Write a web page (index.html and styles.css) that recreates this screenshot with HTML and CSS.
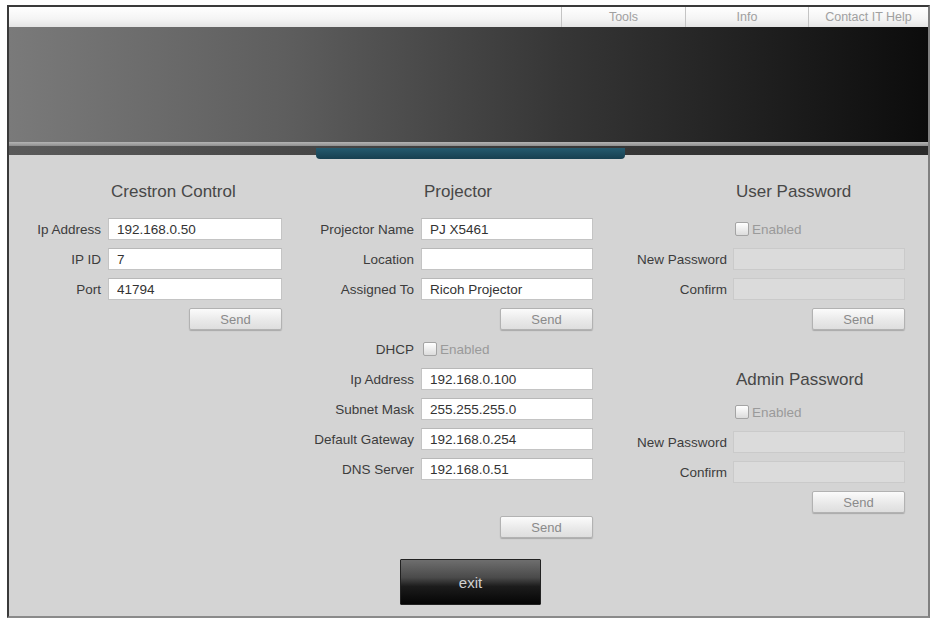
FILE: index.html
```html
<!DOCTYPE html>
<html lang="en">

<head>
    <meta charset="UTF-8">
    <meta name="viewport" content="width=device-width, initial-scale=1.0">
    <title>Projector Setup</title>
    <!-- page styles -->
    <link rel="stylesheet" href="styles.css">
</head>

<body>
    <!-- main frame -->
    <div class="frame">
        <!-- top navigation -->
        <div class="nav">
            <a class="nav-item nav-tools">Tools</a>
            <a class="nav-item nav-info">Info</a>
            <a class="nav-item nav-help">Contact IT Help</a>
        </div>
        <!-- dark banner -->
        <div class="banner"></div>
        <div class="stripe"></div>
        <div class="band"><div class="tab"></div></div>

        <!-- settings columns -->
        <div class="panel">
            <!-- crestron control -->
            <div class="col col-crestron">
                <h2 class="heading">Crestron Control</h2>
                <label class="lbl">Ip Address</label><input class="field" type="text" value="192.168.0.50">
                <label class="lbl">IP ID</label><input class="field" type="text" value="7">
                <label class="lbl">Port</label><input class="field" type="text" value="41794">
                <div class="btn-cell"><button class="btn">Send</button></div>
            </div>

            <!-- projector -->
            <div class="col col-projector">
                <h2 class="heading">Projector</h2>
                <label class="lbl">Projector Name</label><input class="field" type="text" value="PJ X5461">
                <label class="lbl">Location</label><input class="field" type="text" value="">
                <label class="lbl">Assigned To</label><input class="field" type="text" value="Ricoh Projector">
                <div class="btn-cell"><button class="btn">Send</button></div>
                <label class="lbl">DHCP</label>
                <div class="check"><span class="box"></span><span class="check-text">Enabled</span></div>
                <label class="lbl">Ip Address</label><input class="field" type="text" value="192.168.0.100">
                <label class="lbl">Subnet Mask</label><input class="field" type="text" value="255.255.255.0">
                <label class="lbl">Default Gateway</label><input class="field" type="text" value="192.168.0.254">
                <label class="lbl">DNS Server</label><input class="field" type="text" value="192.168.0.51">
                <div class="btn-cell btn-last"><button class="btn">Send</button></div>
            </div>

            <!-- passwords -->
            <div class="col col-password">
                <h2 class="heading">User Password</h2>
                <div class="check"><span class="box"></span><span class="check-text">Enabled</span></div>
                <label class="lbl">New Password</label><input class="field" type="password" disabled>
                <label class="lbl">Confirm</label><input class="field" type="password" disabled>
                <div class="btn-cell"><button class="btn">Send</button></div>

                <h2 class="heading heading-admin">Admin Password</h2>
                <div class="check"><span class="box"></span><span class="check-text">Enabled</span></div>
                <label class="lbl">New Password</label><input class="field" type="password" disabled>
                <label class="lbl">Confirm</label><input class="field" type="password" disabled>
                <div class="btn-cell"><button class="btn">Send</button></div>
            </div>
        </div>

        <!-- exit button -->
        <div class="exit-row">
            <button class="exit">exit</button>
        </div>
    </div>
</body>

</html>
```

FILE: styles.css
```css
/* page body */
body {
    margin: 0;
    background-color: #ffffff;
    font-family: "Liberation Sans", Arial, sans-serif;
}

/* main frame */
.frame {
    box-sizing: border-box;
    margin: 5px 1px 0 7px;
    height: 613px;
    border: 2px solid #3a3a3a;
    border-right-color: #808080;
    border-bottom-color: #8a8a8a;
    background-color: #d4d4d4;
    display: flex;
    flex-direction: column;
}

/* top navigation */
.nav {
    height: 20px;
    display: flex;
    justify-content: flex-end;
    background: linear-gradient(#ffffff, #f4f4f4 60%, #e4e4e4);
}

.nav-item {
    border-left: 1px solid #c4c4c4;
    color: #a0a0a0;
    font-size: 12.5px;
    line-height: 20px;
    text-align: center;
}

.nav-tools { width: 123px; }
.nav-info { width: 122px; }
.nav-help { width: 119px; }

/* dark banner */
.banner {
    height: 115px;
    background: linear-gradient(to right, #7a7a7a, #5e5e5e 30%, #363636 60%, #0c0c0c);
}

.stripe {
    height: 4px;
    background: linear-gradient(#b4b4b4, #8e8e8e);
}

.band {
    height: 9px;
    display: flex;
    background: linear-gradient(to right, #5a5a5a, #3c3c3c 50%, #2a2a2a);
}

.tab {
    position: relative;
    margin: 2px 0 0 307px;
    width: 309px;
    height: 11px;
    border-radius: 0 0 4px 4px;
    background: linear-gradient(#245a6e, #173f50);
}

/* settings columns */
.panel {
    display: flex;
    align-items: flex-start;
    padding-top: 28px;
}

.col {
    display: grid;
    row-gap: 8px;
    align-items: center;
}

.col-crestron {
    grid-template-columns: 92px 174px;
    column-gap: 7px;
}

.col-projector {
    margin-left: 22px;
    grid-template-columns: 110px 172px;
    column-gap: 7px;
}

.col-password {
    margin-left: 30px;
    grid-template-columns: 104px 172px;
    column-gap: 6px;
}

/* section headings */
.heading {
    grid-column: 2;
    margin: 0 0 9px;
    padding-left: 3px;
    font-size: 17px;
    font-weight: normal;
    line-height: 18px;
    color: #474747;
}

.heading-admin {
    margin: 33px 0 4px;
}

/* labels */
.lbl {
    grid-column: 1;
    text-align: right;
    font-size: 13.5px;
    color: #3c3c3c;
}

/* text fields */
.field {
    grid-column: 2;
    box-sizing: border-box;
    height: 22px;
    width: 100%;
    margin: 0;
    padding: 0 8px;
    border: 1px solid #c4c4c4;
    border-top-color: #b8b8b8;
    background-color: #ffffff;
    font-family: "Liberation Sans", Arial, sans-serif;
    font-size: 13.5px;
    color: #333333;
}

.field:disabled {
    background-color: #dbdbdb;
    border-color: #cacaca;
}

/* checkbox rows */
.check {
    grid-column: 2;
    height: 22px;
    display: flex;
    align-items: center;
    padding-left: 2px;
}

.box {
    width: 14px;
    height: 14px;
    box-sizing: border-box;
    border: 1px solid #a4a4a4;
    border-radius: 2px;
    background: linear-gradient(#ffffff, #dcdcdc);
}

.check-text {
    margin-left: 3px;
    font-size: 13.5px;
    color: #9a9a9a;
}

/* send buttons */
.btn-cell {
    grid-column: 2;
    display: flex;
    justify-content: flex-end;
}

.btn-last {
    margin-top: 28px;
}

.btn {
    width: 93px;
    height: 22px;
    padding: 0;
    border: 1px solid #b2b2b2;
    border-radius: 2px;
    background: linear-gradient(#fbfbfb, #e8e8e8 60%, #dedede);
    box-shadow: 0 1px 1px rgba(0, 0, 0, 0.2);
    font-family: "Liberation Sans", Arial, sans-serif;
    font-size: 13px;
    color: #8a8a8a;
}

/* exit button */
.exit-row {
    display: flex;
    justify-content: center;
    padding-left: 4px;
    margin-top: 21px;
}

.exit {
    width: 141px;
    height: 46px;
    border: 1px solid #222222;
    border-radius: 1px;
    background: linear-gradient(#6e6e6e, #4a4a4a 40%, #1c1c1c 60%, #050505);
    font-family: "Liberation Sans", Arial, sans-serif;
    font-size: 15px;
    color: #d0d0d0;
}
```
